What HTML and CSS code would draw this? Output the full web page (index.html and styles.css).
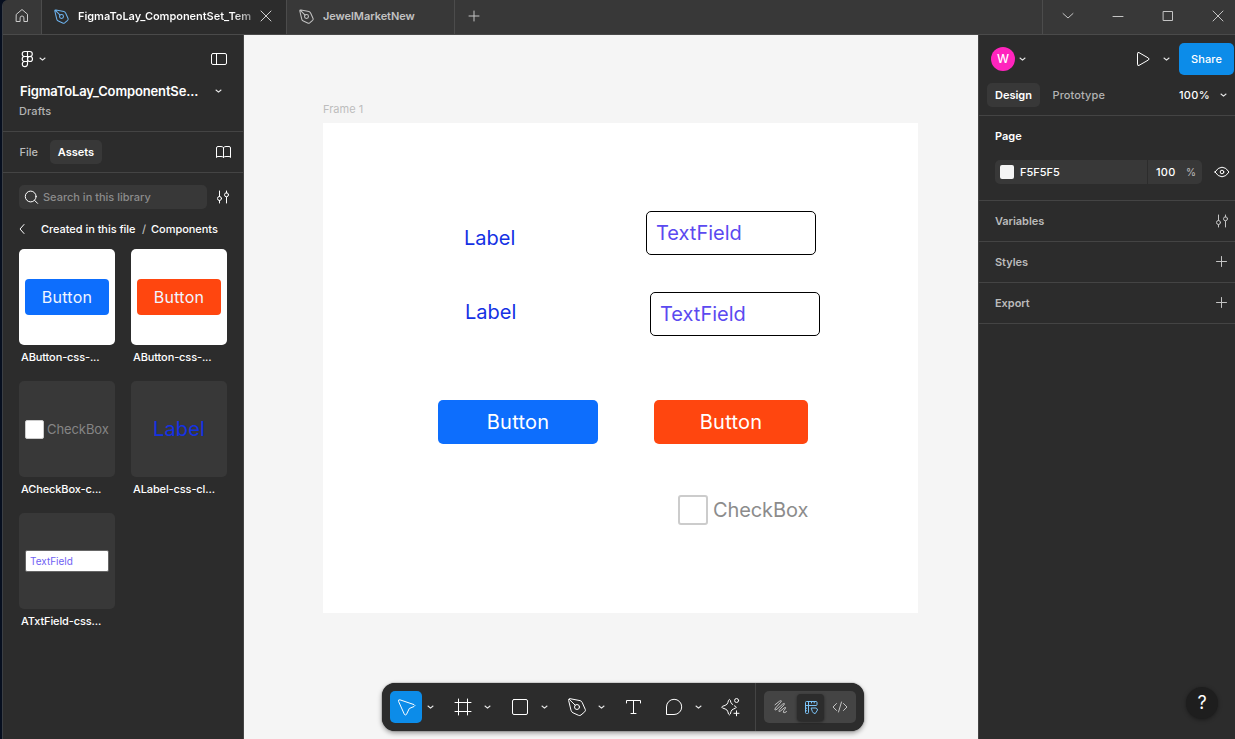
FILE: index.html
```html
<!DOCTYPE html>
<html lang="en">
<head>
<meta charset="utf-8">
<title>FigmaToLay_ComponentSet</title>
<link rel="stylesheet" href="styles.css">
</head>
<body>
<svg class="sprite" aria-hidden="true">
  <symbol id="chev" viewBox="0 0 24 24"><path d="M10 11l2.500 2.200 2.500-2.200"/></symbol>
  <symbol id="plus" viewBox="0 0 24 24"><path d="M6.500 11.500h10M11.500 6.500v10"/></symbol>
  <symbol id="pen" viewBox="0 0 24 24"><path d="M3.600 5.200Q3.300 3.400 5 3.700L15 5.600Q16.600 6 17.200 7.500L20.300 14.500Q20.800 15.800 19.700 16.800L16 20Q14.900 20.900 13.500 20.300L8 17.800Q6.500 17.100 6.100 15.600ZM4.300 4.400L10.200 10.200"/><circle cx="12" cy="12" r="2.500"/></symbol>
  <symbol id="sliders" viewBox="0 0 24 24"><path d="M8.500 6v5.500M8.500 15.500v2.500M15.500 6v2M15.500 12v6"/><circle cx="8.500" cy="13.500" r="2"/><circle cx="15.500" cy="9.800" r="2"/></symbol>
</svg>
<div class="window">
  <header class="titlebar">
    <div class="home"><svg class="ic"><path d="M6.500 10.200L12 5.500l5.500 4.700v7.300h-3.600v-3.600a1.900 1.900 0 0 0-3.800 0v3.600H6.500z"/></svg></div>
    <div class="tab active"><svg class="ic blue pen-sm"><use href="#pen"/></svg><span class="tab-name fade">FigmaToLay_ComponentSet_Tem</span><svg class="ic close"><path d="M7 7l10 10M17 7L7 17"/></svg></div>
    <div class="tab second"><svg class="ic pen-sm"><use href="#pen"/></svg><span class="tab-name">JewelMarketNew</span></div>
    <div class="new-tab"><svg class="ic"><path d="M7 12h10M12 7v10"/></svg></div>
    <div class="win-controls">
      <svg class="ic"><path d="M7 9.500l5 4.500 5-4.500"/></svg>
      <svg class="ic"><path d="M7 12.500h10"/></svg>
      <svg class="ic"><path d="M7.500 7.500h9v9h-9z"/></svg>
      <svg class="ic"><path d="M7 7l10 10M17 7L7 17"/></svg>
    </div>
  </header>
  <main class="workspace">
    <aside class="left">
      <div class="file-head">
        <div class="brand">
          <svg class="ic bright logo"><path d="M12.500 4.500H9.700a2.500 2.500 0 0 0 0 5h2.800zM12.500 4.500h2.300a2.500 2.500 0 0 1 0 5h-2.300zM12.500 9.500H9.700a2.500 2.500 0 0 0 0 5h2.800zM12.500 14.500H9.700a2.600 2.600 0 1 0 2.800 2.600z"/><circle cx="15" cy="12" r="2.500"/></svg>
          <svg class="ic chev"><use href="#chev"/></svg>
          <svg class="ic bright push"><rect x="4.500" y="6.500" width="15" height="11" rx="1.500"/><path d="M9.500 6.500v11"/></svg>
        </div>
        <div class="file-name"><strong>FigmaToLay_ComponentSe...</strong><svg class="ic chev"><use href="#chev"/></svg></div>
        <div class="drafts">Drafts</div>
      </div>
      <nav class="panel-tabs"><span class="file">File</span><span class="pill assets">Assets</span>
        <svg class="ic bright push"><path d="M12.500 7.500Q11.300 6.500 10 6.500H7Q5.500 6.500 5.500 8V17.500Q5.500 16.500 7 16.500H10Q12 16.500 12.500 17.500Q13 16.500 15 16.500H18Q19.500 16.500 19.500 17.500V8Q19.500 6.500 18 6.500H15Q13.700 6.500 12.500 7.500V17.500"/></svg></nav>
      <div class="search-row">
        <div class="search"><svg class="ic bright"><circle cx="11.700" cy="11.500" r="5.400"/><path d="M15.600 15.400l3 3"/></svg><span>Search in this library</span></div>
        <svg class="ic bright"><use href="#sliders"/></svg>
      </div>
      <div class="crumbs"><svg class="ic bright"><path d="M13 7.500L9 12l4 4.500"/></svg><span class="c1">Created in this file</span><i>/</i><span class="c2">Components</span></div>
      <div class="assets-grid">
        <figure><div class="thumb light"><div class="mini-btn azure">Button</div></div><figcaption>AButton-css-...</figcaption></figure>
        <figure><div class="thumb light"><div class="mini-btn orange">Button</div></div><figcaption>AButton-css-...</figcaption></figure>
        <figure><div class="thumb"><div class="mini-check"><b></b><span>CheckBox</span></div></div><figcaption>ACheckBox-c...</figcaption></figure>
        <figure><div class="thumb"><div class="mini-label">Label</div></div><figcaption>ALabel-css-cl...</figcaption></figure>
        <figure><div class="thumb"><div class="mini-field">TextField</div></div><figcaption>ATxtField-css...</figcaption></figure>
      </div>
    </aside>
    <section class="canvas">
      <div class="frame-title">Frame 1</div>
      <div class="frame">
        <div class="node label l1">Label</div>
        <div class="node label l2">Label</div>
        <div class="node field f1">TextField</div>
        <div class="node field f2">TextField</div>
        <div class="node btn azure b1">Button</div>
        <div class="node btn orange b2">Button</div>
        <div class="node check"><b></b><span>CheckBox</span></div>
      </div>
      <div class="toolbar">
        <div class="tool on"><svg class="ic"><path d="M4.500 6Q4.200 4.300 5.900 4.800L20 9.600Q21.800 10.500 20 11.500L15.300 13.500L12.400 19.500Q11.300 21 10.400 19.300Z"/></svg></div><svg class="ic tchev"><use href="#chev"/></svg>
        <div class="tool gap"><svg class="ic"><path d="M7.500 4v16M16.500 4v16M4 7.500h16M4 16.500h16"/></svg></div><svg class="ic tchev"><use href="#chev"/></svg>
        <div class="tool gap"><svg class="ic"><rect x="4.500" y="4.500" width="15" height="15" rx="1.500"/></svg></div><svg class="ic tchev"><use href="#chev"/></svg>
        <div class="tool gap"><svg class="ic"><use href="#pen"/></svg></div><svg class="ic tchev"><use href="#chev"/></svg>
        <div class="tool gap8"><svg class="ic"><path d="M5.500 8V5.500h14V8M12.500 5.500v13M10 18.500h5"/></svg></div>
        <div class="tool gap"><svg class="ic"><path d="M4.500 19V12A7.600 7.600 0 1 1 12 19.500H5Q4.500 19.500 4.500 19z"/></svg></div><svg class="ic tchev"><use href="#chev"/></svg>
        <div class="tool gap"><svg class="ic"><path d="M13.700 9.500Q12.300 9 11.800 7.300L11.300 5.300Q10.400 3.600 9.500 5.300L8.900 7.500Q8.300 9.700 6.100 10.400L3.500 11.300Q1.900 12.200 3.500 13L6.100 13.900Q8.300 14.600 8.900 16.800L9.500 19Q10.400 20.700 11.300 19L12 16.600Q12.500 14.700 14.500 14L16.500 13.200Q18 12.200 16.500 11.300L15.500 10.900M17.500 15.800v5M15 18.300h5"/><circle cx="17.600" cy="5.500" r="2"/></svg></div>
        <div class="modes">
          <span><svg class="ic"><path d="M6 9.800L10.500 6.200Q13.300 4.800 11.800 7.200L6.500 13Q4.700 16.200 8 14.200L13.500 9.200Q16.500 7.300 14.800 10L10.500 14.700Q8.800 17.700 11.800 15.800L15 13Q17.500 11.600 16.300 13.700L14.800 15.600Q13.500 18.200 15.800 17.600L17.500 16.600"/></svg></span>
          <span class="sel"><svg class="ic"><path d="M9.500 10.500V17.500Q9.500 18.500 8.500 18.500H7.500Q6.500 18.500 6.500 17.500V7.500Q6.500 6.500 7.500 6.500H17Q18 6.500 18 7.500V9.500Q18 10.500 17 10.500H6.500M9.500 6.500V10.500M12.500 6.500v1.500M15.200 6.500v1.500M6.500 13.200h1.200M6.500 15.800h1.200M12.500 13L17 13Q18.500 13.500 18.500 15L16.300 18.500Q14.500 18.800 13.600 17z"/></svg></span>
          <span class="code"><svg class="ic"><path d="M8.500 8.500L5 12l3.500 3.500M15.500 8.500L19 12l-3.500 3.500M13.500 7l-3 10"/></svg></span>
        </div>
      </div>
    </section>
    <aside class="right">
      <div class="top"><div class="user"><span class="avatar">W</span><svg class="ic chev"><use href="#chev"/></svg></div>
        <svg class="ic bright play"><path d="M6.500 6.500Q6.500 4.800 8 5.600L17.400 11Q18.700 12 17.400 13L8 18.400Q6.500 19.200 6.500 17.500z"/></svg><svg class="ic chev"><use href="#chev"/></svg><button>Share</button></div>
      <div class="modes-row"><span class="pill design">Design</span><span class="proto">Prototype</span><span class="zoom">100%</span><svg class="ic chev"><use href="#chev"/></svg></div>
      <div class="page"><h2>Page</h2>
        <div class="fill"><div class="hex"><b></b>F5F5F5</div><div class="pct"><span>100</span><i>%</i></div><svg class="ic bright"><path d="M5 12Q8 7.200 12 7.200T19 12Q16 16.800 12 16.800T5 12z"/><circle cx="12" cy="12" r="1.800"/></svg></div></div>
      <div class="row"><span>Variables</span><svg class="ic"><use href="#sliders"/></svg></div>
      <div class="row"><span>Styles</span><svg class="ic"><use href="#plus"/></svg></div>
      <div class="row"><span>Export</span><svg class="ic"><use href="#plus"/></svg></div>
      <div class="help">?</div>
    </aside>
  </main>
</div>
</body>
</html>
```
FILE: styles.css
```css
* { box-sizing: border-box; }
body { margin: 0; background: #070f1f; font: 500 11px/16px Inter, sans-serif; color: #fff; overflow: hidden; }
.sprite { position: absolute; width: 0; height: 0; }
.ic { width: 24px; height: 24px; flex: none; fill: none; stroke: #c4c4c4; stroke-width: 1; stroke-linejoin: round; stroke-linecap: round; }
.bright, .tool .ic { stroke: #fff; }
.chev { stroke: #e8e8e8; stroke-width: 1.100; }
.blue { stroke: #6cb2ee; }
.push { margin-left: auto; }
.window { width: 1233px; height: 739px; margin-left: 2px; border-left: 1px solid #3b3f45; border-top-left-radius: 6px; overflow: hidden; display: flex; flex-direction: column; background: #2c2c2c; }
.titlebar { height: 35px; display: flex; background: #383838; border-bottom: 1px solid #4a4a4a; flex: none; }
.titlebar > div { display: flex; align-items: center; height: 34px; padding-bottom: 2px; }
.home { width: 39px; border-right: 1px solid #4c4c4c; padding-left: 7px; }
.home .ic { stroke: #ccc; }
.tab { border-right: 1px solid #4c4c4c; }
.tab.active { width: 245px; background: #2c2c2c; padding-left: 10px; }
.tab.second { width: 168px; padding-left: 10px; color: #c2c2c2; letter-spacing: -.06px; }
.tab-name { font-weight: 600; white-space: nowrap; margin-left: 4px; }
.pen-sm { width: 19px; height: 19px; margin: 0 3px 0 0; stroke-width: 1.300; }
.fade { width: 174px; letter-spacing: -.05px; background: linear-gradient(90deg, #fff 155px, #777 176px); background-clip: text; -webkit-background-clip: text; color: transparent; }
.tab.active .close { margin-left: 2px; }
.tab .close { stroke: #d0d0d0; }
.new-tab { padding-left: 7px; flex: 1; }
.win-controls { width: 193px; border-left: 1px solid #4c4c4c; padding-left: 13px; gap: 26px; }
.workspace { flex: 1; display: flex; min-height: 0; }
.left { width: 241px; flex: none; border-right: 1px solid #444; }
.file-head { height: 97px; padding: 12px 12px 0 12px; border-bottom: 1px solid #444; }
.brand { display: flex; align-items: center; height: 24px; }
.brand .chev { margin-left: -9px; }
.logo { stroke-width: 1.150; }
.file-name { height: 24px; margin: 8px 0 0 5px; display: flex; align-items: center; font-size: 13px; letter-spacing: -.14px; }
.file-name strong { font-weight: 600; width: 186px; white-space: nowrap; }
.drafts { margin: 0 4px; color: #b3b3b3; letter-spacing: .1px; }
.panel-tabs { height: 41px; border-bottom: 1px solid #444; display: flex; align-items: center; padding: 0 8px 0 16.500px; color: #bbb; }
.pill { height: 24px; line-height: 24px; border-radius: 5px; background: #383838; color: #fff; font-weight: 600; text-align: center; }
.file { width: 30.500px; }
.assets { width: 52px; }
.search-row { margin: 12px 8px 0 16px; display: flex; align-items: center; gap: 4px; }
.search { width: 188px; height: 24px; border-radius: 5px; background: #383838; display: flex; align-items: center; color: #8c8c8c; }
.crumbs { height: 24px; margin-top: 8px; display: flex; align-items: center; padding-left: 8px; letter-spacing: -.04px; }
.crumbs .c1 { margin-left: 6px; width: 95px; white-space: nowrap; }
.crumbs i { font-style: normal; margin: 0 5px 0 6px; color: #bbb; }
.assets-grid { margin: 8px 0 0 16px; display: grid; grid-template-columns: 96px 96px; gap: 12px 16px; }
figure { margin: 0; height: 120px; }
.thumb { width: 96px; height: 96px; border-radius: 5px; background: #383838; padding: 6px; display: flex; align-items: center; justify-content: center; }
.light { background: #fff; }
figcaption { padding: 4px 2px; white-space: nowrap; letter-spacing: -.12px; }
.azure { background: #0d6efd; }
.orange { background: #ff460f; }
.mini-btn { width: 84px; height: 36px; border-radius: 4px; font: 400 16px/36px Inter, sans-serif; text-align: center; letter-spacing: .3px; color: #f0f5ff; }
.mini-check { width: 84px; display: flex; align-items: center; gap: 3px; font: 400 13px/20px Inter, sans-serif; color: #858585; letter-spacing: -.08px; }
.mini-check b { width: 19px; height: 19px; background: #fff; border: 1px solid #ccc; border-radius: 2px; }
.mini-label { font: 400 20px/24px Inter, sans-serif; color: #1431e4; letter-spacing: .1px; }
.mini-field { width: 84px; height: 22px; border: 1px solid #666; border-radius: 2px; background: #fff; padding-left: 4px; font: 400 10px/20px Inter, sans-serif; color: #6f62f4; }
.canvas { flex: 1; background: #f5f5f5; position: relative; padding: 66px 0 0 79px; }
.frame-title { color: #bdbdbd; font-weight: 400; height: 22px; }
.frame { width: 595px; height: 490px; background: #fff; position: relative; font: 400 20px/24px Inter, sans-serif; }
.node { position: absolute; white-space: nowrap; }
.label { color: #1431e4; }
.l1 { left: 141px; top: 103px; }
.l2 { left: 142px; top: 177px; }
.field { width: 170px; height: 44px; border: 1px solid #000; border-radius: 5px; padding: 9px; color: #5b4af0; }
.f1 { left: 323px; top: 88px; }
.f2 { left: 327px; top: 169px; }
.btn { height: 44px; line-height: 44px; border-radius: 5px; text-align: center; color: #fff; letter-spacing: .2px; }
.b1 { left: 115px; top: 277px; width: 160px; }
.b2 { left: 331px; top: 277px; width: 154px; }
.check { left: 355px; top: 372px; display: flex; align-items: center; gap: 5px; color: #8c8c8c; letter-spacing: -.1px; }
.check b { width: 30px; height: 30px; border: 2px solid #ccc; border-radius: 3px; }
.toolbar { position: absolute; left: 138px; top: 648px; width: 482px; height: 48px; border-radius: 13px; background: #2c2c2c; box-shadow: 0 0 1px #000, 0 2px 5px rgba(0,0,0,.4); display: flex; align-items: center; padding-left: 8px; }
.tool { width: 32px; height: 32px; display: flex; align-items: center; justify-content: center; border-radius: 5px; flex: none; }
.on { background: #0c8ce9; }
.tchev { margin: 0 -4px; stroke: #e8e8e8; stroke-width: 1.100; }
.gap { margin-left: 9px; }
.gap8 { margin-left: 8px; }
.modes { display: flex; margin-left: 17px; position: relative; width: 92px; height: 32px; border-radius: 5px; background: #444; align-items: center; }
.modes::before { content: ""; position: absolute; left: -9px; top: -8px; width: 1px; height: 48px; background: #444; }
.modes span { width: 33px; display: flex; justify-content: center; }
.modes .code { width: 32px; }
.modes .sel { width: 27px; height: 27px; align-items: center; background: #2c2c2c; border-radius: 4px; box-shadow: 0 1px 3px rgba(0,0,0,.5); }
.modes .sel .ic { stroke: #7cc4f8; }
.right { width: 257px; flex: none; border-left: 1px solid #444; position: relative; }
.top { height: 48px; padding-left: 12px; display: flex; align-items: center; }
.user { display: flex; align-items: center; width: 140px; }
.avatar { width: 24px; height: 24px; border-radius: 50%; background: #ff24bd; text-align: center; font-size: 12px; line-height: 24px; }
.user .chev { margin-left: -5px; }
.play + .chev { margin-left: -1px; }
.top button { margin-left: 1px; width: 55px; height: 32px; padding: 0; border: 0; border-radius: 5px; background: #0c8ce9; color: #fff; font: 500 11px/32px Inter, sans-serif; letter-spacing: .1px; }
.modes-row { height: 33px; border-bottom: 1px solid #444; padding-left: 8px; display: flex; align-items: flex-start; line-height: 24px; }
.design { width: 53px; }
.proto { margin-left: 12px; width: 127px; color: #b3b3b3; letter-spacing: .1px; padding-left: .5px; }
.zoom { width: 32px; letter-spacing: .3px; }
.page { height: 85px; border-bottom: 1px solid #444; padding: 12px 0 0 16px; }
h2 { margin: 0; font: 600 11px/16px Inter, sans-serif; }
.fill { display: flex; height: 24px; margin-top: 16px; line-height: 24px; }
.hex { width: 152px; background: #383838; border-radius: 5px 0 0 5px; display: flex; align-items: center; padding-left: 5px; }
.hex b { width: 14px; height: 14px; border-radius: 2px; background: #f5f5f5; margin-right: 6px; }
.pct { width: 54px; background: #383838; border-radius: 0 5px 5px 0; margin-left: 1px; display: flex; padding-left: 8px; }
.pct span { width: 30px; letter-spacing: .3px; }
.pct i { font-style: normal; color: #b3b3b3; font-size: 10px; }
.fill > .ic { margin-left: 8px; }
.row { height: 41px; border-bottom: 1px solid #444; padding: 0 1px 0 16px; display: flex; align-items: center; justify-content: space-between; color: #bbb; font-weight: 600; letter-spacing: -.05px; }
.help { position: absolute; left: 207px; top: 652px; width: 32px; height: 32px; border-radius: 50%; background: #1e1e1e; box-shadow: 0 1px 4px rgba(0,0,0,.4); font-size: 18px; font-weight: 400; line-height: 32px; text-align: center; }
```
